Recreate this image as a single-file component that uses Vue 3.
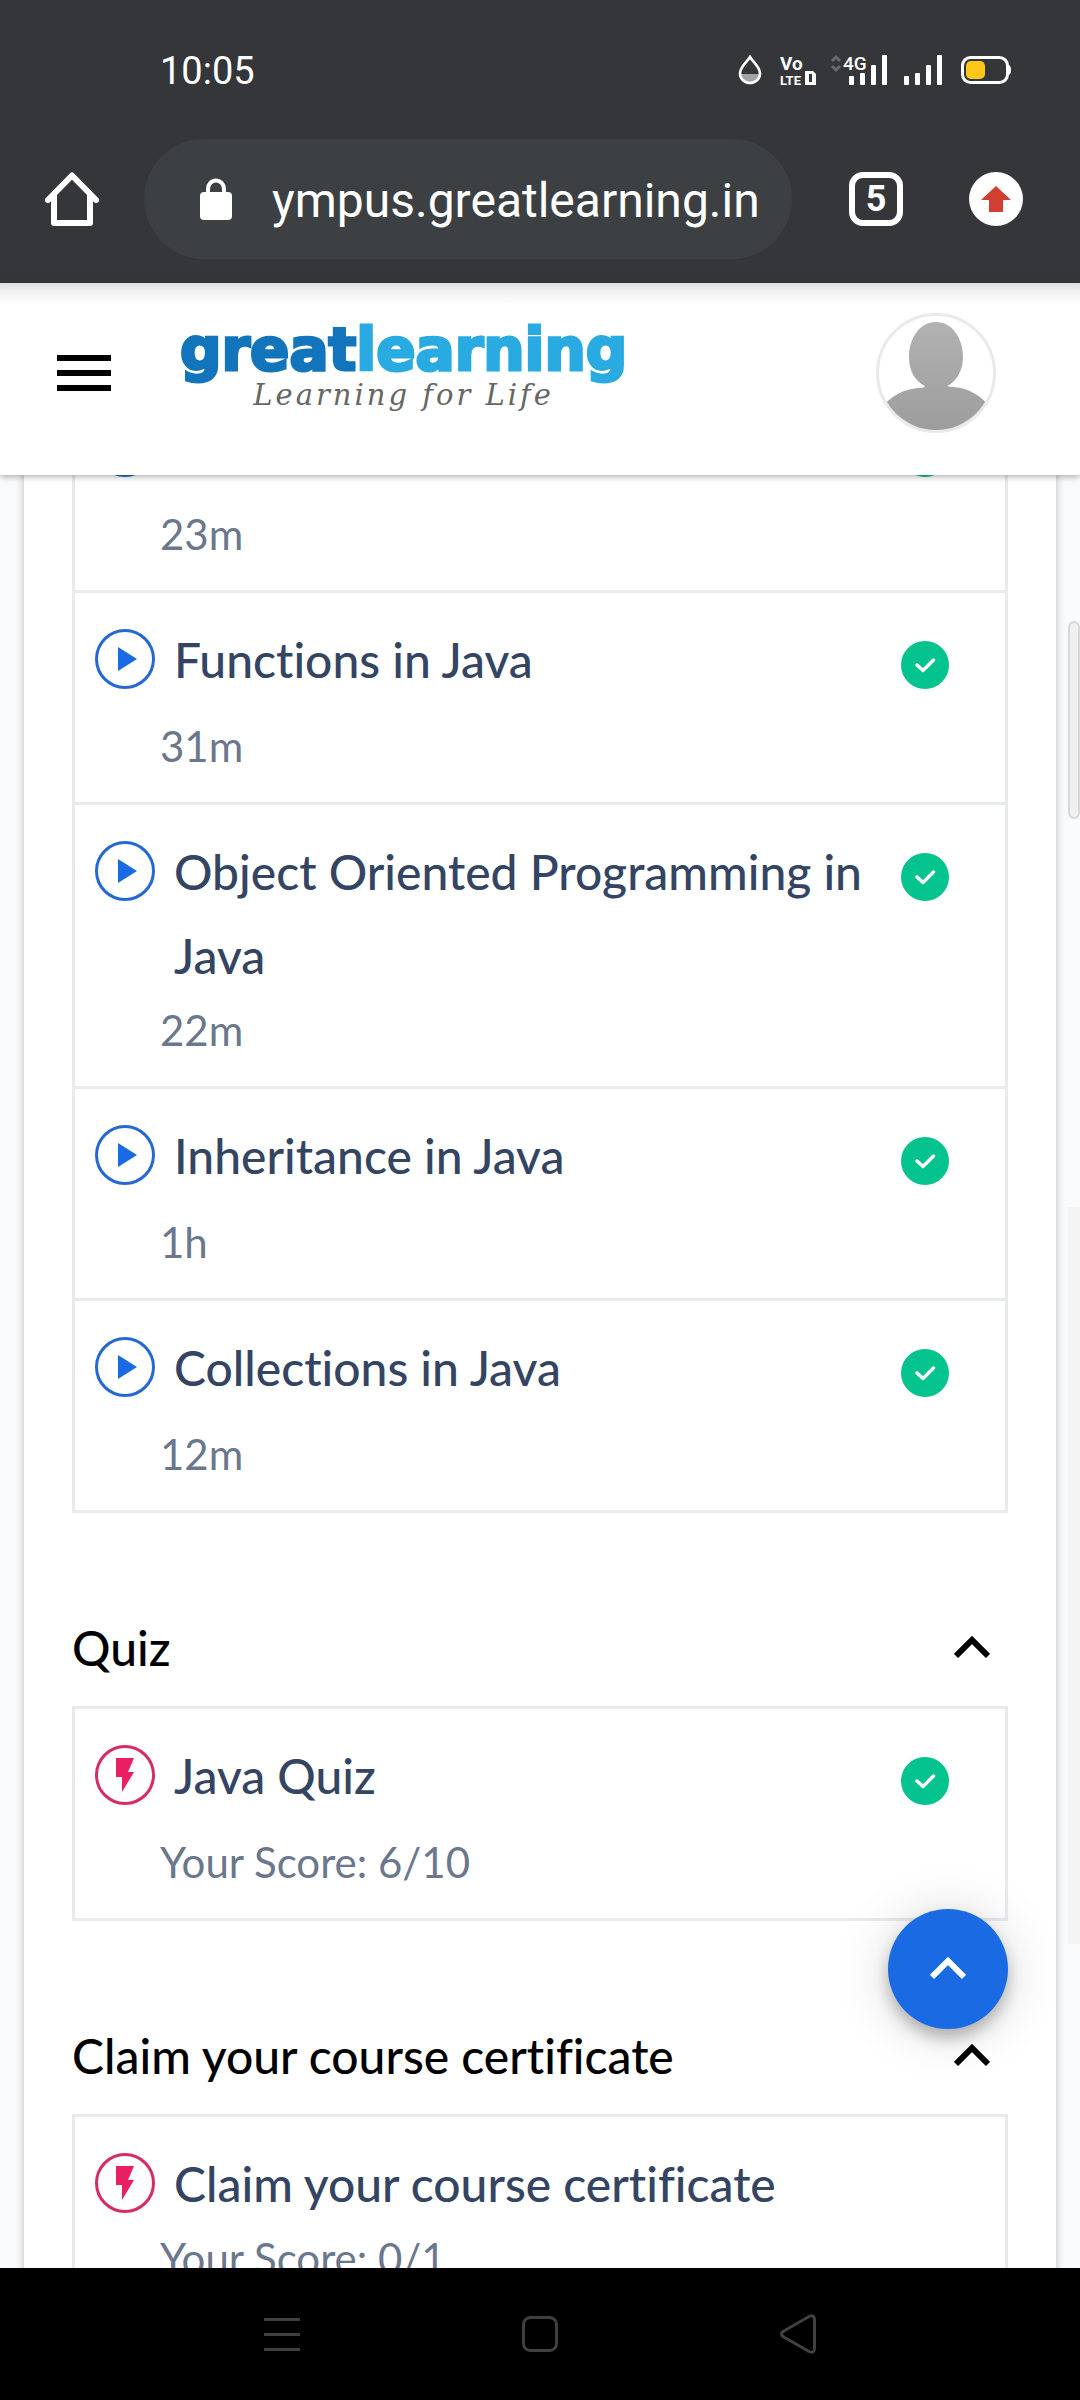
<script setup>
const videos = [
  { title: '', meta: '23m', done: true },
  { title: 'Functions in Java', meta: '31m', done: true },
  { title: 'Object Oriented Programming in Java', meta: '22m', done: true },
  { title: 'Inheritance in Java', meta: '1h', done: true },
  { title: 'Collections in Java', meta: '12m', done: true },
]

const sections = [
  { heading: '', kind: 'video', items: videos },
  { heading: 'Quiz', kind: 'quiz', items: [{ title: 'Java Quiz', meta: 'Your Score: 6/10', done: true }] },
  {
    heading: 'Claim your course certificate',
    kind: 'quiz',
    items: [{ title: 'Claim your course certificate', meta: 'Your Score: 0/1', done: false }],
  },
]
</script>

<template>
  <div class="screen">
    <div class="browser">
      <div class="status">
        <time class="clock">10:05</time>
        <div class="indicators">
          <svg class="drop" width="26" height="32" viewBox="0 0 26 32">
            <path d="M4 20H22A9 9 0 0 1 4 20Z" fill="#a3a3a6" />
            <path d="M13 3C10 8 3 13 3 19.500A10 9.500 0 0 0 23 19.500C23 13 16 8 13 3Z" fill="none" stroke="#fff" stroke-width="2.600" />
          </svg>
          <svg class="volte" width="36" height="36" viewBox="0 0 36 36" fill="#fff">
            <text x="0" y="16" class="tiny vo">Vo</text>
            <text x="0" y="31" class="tiny lte">LTE</text>
            <path fill-rule="evenodd" d="M25 17H33L36 20V31H25ZM29 20V28H32V20Z" />
          </svg>
          <svg class="signal4g" width="58" height="32" viewBox="0 0 58 32" fill="#fff">
            <path d="M2 7L6 3L10 7M2 12L6 16L10 12" fill="none" stroke="#68696c" stroke-width="3" />
            <text x="13" y="16" class="net">4G</text>
            <rect x="19" y="22" width="5" height="9" rx="1" />
            <rect x="30" y="19" width="5" height="12" rx="1" />
            <rect x="41" y="11" width="5" height="20" rx="1" />
            <rect x="52" y="1" width="5" height="30" rx="1" />
          </svg>
          <svg class="signal" width="38" height="32" viewBox="0 0 38 32" fill="#fff">
            <rect x="0" y="22" width="5" height="9" rx="1" />
            <rect x="11" y="19" width="5" height="12" rx="1" />
            <rect x="22" y="11" width="5" height="20" rx="1" />
            <rect x="33" y="1" width="5" height="30" rx="1" />
          </svg>
          <svg width="50" height="32" viewBox="0 0 50 32">
            <rect x="1.500" y="3.500" width="45" height="25" rx="8" fill="none" stroke="#fff" stroke-width="3" />
            <path d="M47 11Q50 11 50 16Q50 21 47 21Z" fill="#fff" />
            <rect x="5" y="7" width="19" height="18" rx="5" fill="#ffc71a" />
          </svg>
        </div>
      </div>
      <div class="toolbar">
        <button class="plain home" aria-label="Home">
          <svg width="54" height="54" viewBox="0 0 54 54" fill="none" stroke="#fff" stroke-width="6" stroke-linecap="round" stroke-linejoin="round">
            <path d="M3 28L27 3.500L51 28" />
            <path d="M9 23V51H45V23" />
          </svg>
        </button>
        <a class="url" href="#">
          <svg width="32" height="42" viewBox="0 0 32 42">
            <path d="M8 18V11A8 8.500 0 0 1 24 11V18" fill="none" stroke="#fff" stroke-width="4" />
            <rect x="0" y="14" width="32" height="28" rx="4" fill="#fff" />
          </svg>
          <span>ympus.greatlearning.in</span>
        </a>
        <button class="tabs" aria-label="Open tabs">5</button>
        <button class="plain update" aria-label="Update">
          <svg width="54" height="54" viewBox="0 0 54 54">
            <circle cx="27" cy="27" r="27" fill="#fff" />
            <path d="M27 14L42 28H34V40H20V28H12Z" fill="#d23f31" />
          </svg>
        </button>
      </div>
    </div>

    <header class="header">
      <button class="plain menu" aria-label="Menu">
        <svg width="54" height="36" viewBox="0 0 54 36"><path d="M0 0H54V6H0ZM0 15H54V21H0ZM0 30H54V36H0Z" /></svg>
      </button>
      <a class="logo" href="#">
        <span class="brand"><span class="great">great</span><span class="learning">learning</span></span>
        <span class="tagline">Learning for Life</span>
      </a>
      <button class="plain avatar" aria-label="Profile">
        <svg width="114" height="114" viewBox="3 3 114 114">
          <defs>
            <linearGradient id="shade" x1="0" y1="0" x2="0" y2="1">
              <stop offset="0" stop-color="#b2b2b2" />
              <stop offset="1" stop-color="#9c9c9c" />
            </linearGradient>
          </defs>
          <path fill="url(#shade)" d="M60 9C76 9 87 25 87 44C87 58 80 69 71 73Q74 74 78 74C93 75 106 84 112 92V120H8V92C14 85 27 75 45 75Q48 75 49 73C39 68 33 58 33 44C33 25 44 9 60 9Z" />
        </svg>
      </button>
    </header>

    <main class="viewport">
      <div class="card">
        <section v-for="(section, s) in sections" :key="s">
          <h2 v-if="section.heading" class="heading">
            <span>{{ section.heading }}</span>
            <button class="plain" aria-label="Collapse section">
              <svg width="36" height="24" viewBox="0 0 36 24"><path d="M2 20L18 4L34 20" fill="none" stroke="#000" stroke-width="6" /></svg>
            </button>
          </h2>
          <ul class="list">
            <li v-for="item in section.items" :key="item.meta" class="row">
              <svg class="kind" width="60" height="60" viewBox="0 0 60 60">
                <template v-if="section.kind === 'video'">
                  <circle cx="30" cy="30" r="28.500" fill="none" stroke="#2468d4" stroke-width="3" />
                  <path d="M23 18L42 30L23 42Z" fill="#1a6ae4" />
                </template>
                <template v-else>
                  <circle cx="30" cy="30" r="28.500" fill="none" stroke="#d62b63" stroke-width="3" />
                  <path d="M21 13H39L33 27H39L27 47V32H21Z" fill="#e91e63" />
                </template>
              </svg>
              <a class="title" href="#">{{ item.title }}</a>
              <svg v-if="item.done" class="done" width="48" height="48" viewBox="0 0 48 48">
                <circle cx="24" cy="24" r="24" fill="#04c38e" />
                <path d="M16 24L22 29.500L32.500 19" fill="none" stroke="#fff" stroke-width="3.400" stroke-linecap="round" stroke-linejoin="round" />
              </svg>
              <span class="meta">{{ item.meta }}</span>
            </li>
          </ul>
        </section>
      </div>
      <div class="track"></div>
      <div class="thumb"></div>
      <button class="fab" aria-label="Back to top">
        <svg width="36" height="24" viewBox="0 0 36 24"><path d="M2 20L18 4L34 20" fill="none" stroke="#fff" stroke-width="6" /></svg>
      </button>
    </main>

    <nav class="system">
      <button class="plain" aria-label="Recent apps">
        <svg width="36" height="36" viewBox="0 0 36 36"><path d="M0 2H36V5H0ZM0 17H36V20H0ZM0 32H36V35H0Z" fill="#404040" /></svg>
      </button>
      <button class="plain" aria-label="Home screen">
        <svg width="36" height="36" viewBox="0 0 36 36"><rect x="1.500" y="1.500" width="33" height="33" rx="7" fill="none" stroke="#404040" stroke-width="3" /></svg>
      </button>
      <button class="plain" aria-label="Back">
        <svg width="36" height="40" viewBox="0 0 36 40"><path d="M29 2.500Q34.500 0 34.500 6V34Q34.500 40 29 37.500L3 22.500Q0 20 3 17.500Z" fill="none" stroke="#404040" stroke-width="3" /></svg>
      </button>
    </nav>
  </div>
</template>

<style>
body {
  margin: 0;
  background: #f8fafc;
}
</style>

<style scoped>
.screen {
  display: flex;
  flex-direction: column;
  height: 100vh;
  font-family: Lato, sans-serif;
  font-variant-ligatures: none;
}

a {
  color: inherit;
  text-decoration: none;
}

svg {
  display: block;
  flex: none;
}

.plain {
  display: block;
  flex: none;
  padding: 0;
  border: 0;
  background: none;
}

.browser {
  flex: none;
  background: #35363a;
  color: #fff;
  font-family: Roboto, sans-serif;
}

.status {
  display: flex;
  align-items: center;
  justify-content: space-between;
  height: 139px;
  padding: 0 69px 0 160px;
}

.clock {
  padding-top: 3px;
  font-size: 38px;
}

.indicators {
  display: flex;
  height: 32px;
}

.volte {
  margin-left: 17px;
}

.signal4g {
  margin-left: 14px;
}

.signal {
  margin: 0 19px 0 16px;
}

.tiny {
  font-family: "Liberation Sans Narrow", Roboto, sans-serif;
  font-weight: 700;
}

.vo {
  font-size: 19px;
}

.lte {
  font-size: 13px;
}

.net {
  font-size: 19px;
  font-weight: 500;
}

.toolbar {
  display: flex;
  align-items: center;
  height: 120px;
  padding: 0 57px 24px 45px;
}

.url {
  display: flex;
  flex: 1;
  align-items: center;
  gap: 40px;
  height: 120px;
  margin: 0 57px 0 45px;
  padding-left: 56px;
  border-radius: 60px;
  background: #3c4043;
  font-size: 48px;
  white-space: nowrap;
}

.url span {
  padding-top: 2px;
}

.tabs {
  box-sizing: border-box;
  width: 54px;
  height: 54px;
  padding: 0;
  border: 6px solid #fff;
  border-radius: 14px;
  background: none;
  color: #fff;
  font: 700 36px/42px Roboto, sans-serif;
}

.update {
  margin-left: 66px;
}

.header {
  position: relative;
  z-index: 2;
  display: flex;
  flex: none;
  align-items: flex-start;
  box-sizing: border-box;
  height: 192px;
  padding: 30px 84px 0 57px;
  background: linear-gradient(#dcdddf, #f0f0f0 8px, #fff 22px);
  box-shadow: 0 2px 6px rgba(0, 0, 0, 0.3);
}

.menu {
  margin-top: 42px;
}

.logo {
  display: flex;
  flex-direction: column;
  align-items: center;
  margin: 5px 0 0 69px;
}

.brand {
  font: 700 58px/64px "DejaVu Sans", sans-serif;
  -webkit-text-stroke-width: 3px;
}

.great {
  color: #1275bc;
}

.learning {
  color: #29abe2;
}

.tagline {
  color: #666;
  font: italic 29px/26px "DejaVu Serif", serif;
  letter-spacing: 3px;
}

.avatar {
  overflow: hidden;
  margin-left: auto;
  border: 3px solid #e9eaee;
  border-radius: 50%;
}

.viewport {
  position: relative;
  flex: 1;
  min-height: 0;
  overflow: hidden;
}

.card {
  margin: -97px 24px 0;
  padding: 0 48px;
  background: #fff;
  box-shadow: 0 0 8px rgba(0, 0, 0, 0.25);
}

.heading {
  display: flex;
  align-items: center;
  justify-content: space-between;
  margin: 0;
  padding: 93px 18px 16px 0;
  color: #000;
  font-size: 48px;
  font-weight: 500;
  line-height: 84px;
}

.list {
  margin: 0;
  padding: 0;
  border: 3px solid #e9eaee;
  list-style: none;
}

.row {
  display: grid;
  grid-template-columns: 60px 1fr auto;
  column-gap: 19px;
  padding: 25px 56px 24px 20px;
}

.row + .row {
  border-top: 3px solid #e9eaee;
}

.kind {
  margin-top: 11px;
}

.title {
  color: #344563;
  font-size: 48px;
  font-weight: 500;
  line-height: 84px;
}

.done {
  margin: 23px 0 25px;
}

.meta {
  grid-column: 1 / -1;
  padding-left: 65px;
  color: #6b778c;
  font-size: 42px;
  line-height: 64px;
}

.track {
  position: absolute;
  top: 732px;
  right: 0;
  width: 12px;
  height: 737px;
  background: #f4f4f4;
}

.thumb {
  position: absolute;
  top: 146px;
  right: 0;
  box-sizing: border-box;
  width: 12px;
  height: 198px;
  border: 2px solid #d6d8d9;
  border-radius: 6px;
  background: #efefef;
}

.fab {
  position: absolute;
  right: 72px;
  bottom: 239px;
  display: flex;
  align-items: center;
  justify-content: center;
  width: 120px;
  height: 120px;
  padding: 0;
  border: 0;
  border-radius: 50%;
  background: #1a6ae4;
  box-shadow: 0 9px 15px rgba(0, 0, 0, 0.25), 0 4px 54px rgba(0, 0, 0, 0.16);
}

.system {
  display: flex;
  flex: none;
  align-items: center;
  justify-content: space-between;
  height: 132px;
  padding: 0 264px;
  background: #000;
}
</style>
